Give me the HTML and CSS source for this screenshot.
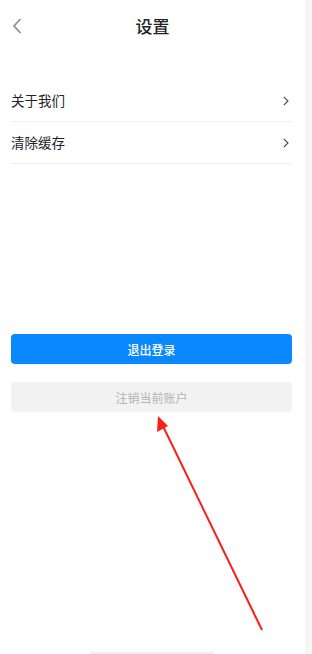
FILE: index.html
```html
<!DOCTYPE html>
<html lang="zh">
<head>
<meta charset="utf-8">
<link rel="stylesheet" href="styles.css">
</head>
<body>
<div class="screen">
  <div class="page">
    <header class="nav">
      <svg class="back" width="10" height="16" viewBox="0 0 10 16"><path d="M8.5 1 L2 8 L8.5 15" fill="none" stroke="#888" stroke-width="1.6"/></svg>
      <h1 class="title">设置</h1>
    </header>
    <ul class="list">
      <li class="row"><span>关于我们</span><svg class="chev" width="6" height="10" viewBox="0 0 6 10"><path d="M0.8 0.8 L5 5 L0.8 9.2" fill="none" stroke="#444" stroke-width="1.1"/></svg></li>
      <li class="row"><span>清除缓存</span><svg class="chev" width="6" height="10" viewBox="0 0 6 10"><path d="M0.8 0.8 L5 5 L0.8 9.2" fill="none" stroke="#444" stroke-width="1.1"/></svg></li>
    </ul>
    <div class="actions">
      <button class="btn primary">退出登录</button>
      <button class="btn muted">注销当前账户</button>
    </div>
    <div class="home-bar"></div>
  </div>
  <div class="scroll-strip"></div>
  <svg class="arrow" width="312" height="654" viewBox="0 0 312 654">
    <line x1="262" y1="630" x2="161" y2="422" stroke="#f4221b" stroke-width="2"/>
    <polygon points="158,416 157,432 168,426" fill="#f4221b"/>
  </svg>
</div>
</body>
</html>
```
FILE: styles.css
```css
* { box-sizing: border-box; }
html, body { margin: 0; padding: 0; }
body {
  font-family: "Noto Sans CJK SC", "Noto Sans", sans-serif;
  background: #fff;
  width: 312px;
  height: 654px;
  overflow: hidden;
}
.screen {
  position: relative;
  display: flex;
  width: 312px;
  height: 654px;
}
.page {
  width: 305px;
  height: 654px;
  display: flex;
  flex-direction: column;
  background: #fff;
  position: relative;
}
.scroll-strip {
  width: 7px;
  height: 654px;
  background: #f5f5f5;
}
.nav {
  height: 50px;
  display: flex;
  align-items: center;
  justify-content: center;
  position: relative;
}
.back {
  position: absolute;
  left: 12px;
  top: 18px;
}
.title {
  margin: 0;
  font-size: 17px;
  font-weight: 500;
  color: #222;
  line-height: 1;
}
.list {
  list-style: none;
  margin: 30px 0 0;
  padding: 0 13px 0 11px;
}
.row {
  height: 42px;
  display: flex;
  align-items: center;
  justify-content: space-between;
  border-bottom: 1px solid #eeeeee;
  font-size: 13.5px;
  color: #222;
  padding-right: 3px;
}
.row span { margin-top: -2px; }
.actions {
  margin-top: 170px;
  padding: 0 13px 0 11px;
  display: flex;
  flex-direction: column;
  gap: 18px;
}
.btn {
  height: 30px;
  border: none;
  border-radius: 4px;
  font-family: inherit;
  font-size: 12px;
  width: 100%;
  padding: 0;
}
.primary {
  background: #0a89ff;
  color: #fff;
  font-weight: 500;
}
.muted {
  background: #f2f2f2;
  color: #b2b2b2;
}
.home-bar {
  position: absolute;
  left: 90px;
  bottom: 0;
  width: 124px;
  height: 2px;
  background: #eeeeee;
  border-radius: 1px;
}
.arrow {
  position: absolute;
  left: 0;
  top: 0;
  pointer-events: none;
}
```
